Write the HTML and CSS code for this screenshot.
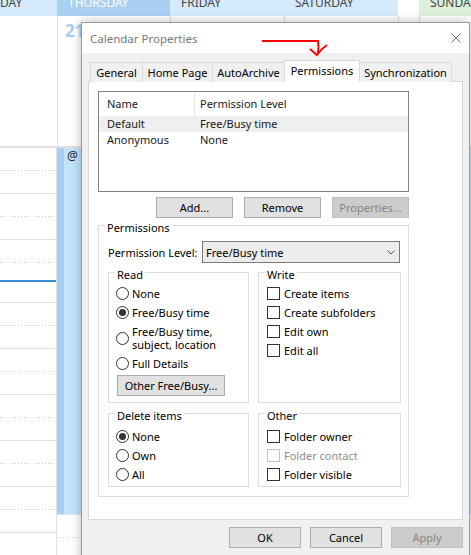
FILE: index.html
```html
<!DOCTYPE html>
<html>
<head>
<meta charset="utf-8">
<link rel="stylesheet" href="styles.css">
</head>
<body>
<div class="screen">
  <div class="calendar">
    <div class="cal-head">
      <div class="hcell first">DAY</div>
      <div class="hcell today">THURSDAY</div>
      <div class="hcell">FRIDAY</div>
      <div class="hcell">SATURDAY</div>
      <div class="hcell blank"></div>
      <div class="hcell sunday">SUNDAY</div>
    </div>
    <div class="cal-dates">
      <div class="dcell first"></div>
      <div class="dcell"><span class="daynum">21</span></div>
      <div class="dcell"></div>
      <div class="dcell"></div>
      <div class="dcell"></div>
      <div class="dcell"></div>
    </div>
    <div class="cal-times">
      <div class="tcol first">
        <div class="slot dot"></div>
        <div class="slot solid"></div>
        <div class="slot dot"></div>
        <div class="slot solid"></div>
        <div class="slot dot"></div>
        <div class="slot solid"><div class="nowline"></div></div>
        <div class="slot dot"></div>
        <div class="slot solid"></div>
        <div class="slot dot"></div>
        <div class="slot solid"></div>
        <div class="slot dot"></div>
        <div class="slot solid"></div>
        <div class="slot dot"></div>
        <div class="slot solid"></div>
        <div class="slot dot"></div>
        <div class="slot solid"></div>
        <div class="slot dot"></div>
        <div class="slot solid"></div>
      </div>
      <div class="tcol thu">
        <div class="appt"><div class="appt-strip"></div><div class="appt-body">@ i</div></div>
        <div class="slot dot"></div>
      </div>
    </div>
  </div>

  <div class="dialog">
    <div class="titlebar">
      <span class="title">Calendar Properties</span>
      <svg class="close" width="10" height="10" viewBox="0 0 10 10"><path d="M0.5 0.5 L9.5 9.5 M9.5 0.5 L0.5 9.5" stroke="#707070" stroke-width="1" fill="none"/></svg>
    </div>
    <div class="tabs">
      <div class="tab t-general">General</div>
      <div class="tab t-home">Home Page</div>
      <div class="tab t-archive">AutoArchive</div>
      <div class="tab t-perm active">Permissions</div>
      <div class="tab t-sync">Synchronization</div>
    </div>
    <div class="panel">
      <div class="listbox">
        <div class="lrow lhead"><span class="c1">Name</span><span class="c2">Permission Level</span></div>
        <div class="lrow sel"><span class="c1">Default</span><span class="c2">Free/Busy time</span></div>
        <div class="lrow"><span class="c1">Anonymous</span><span class="c2">None</span></div>
      </div>
      <div class="btnrow">
        <button class="btn">Add...</button>
        <button class="btn">Remove</button>
        <button class="btn disabled">Properties...</button>
      </div>
      <fieldset class="group outer">
        <legend>Permissions</legend>
        <div class="levelrow">
          <span class="lbl">Permission Level:</span>
          <div class="combo"><span>Free/Busy time</span><svg width="8" height="5" viewBox="0 0 8 5"><path d="M0.5 0.5 L4 4 L7.5 0.5" stroke="#555" fill="none"/></svg></div>
        </div>
        <div class="subgrid">
          <fieldset class="group read">
            <legend>Read</legend>
            <div class="opt"><span class="radio"></span><span>None</span></div>
            <div class="opt"><span class="radio on"></span><span>Free/Busy time</span></div>
            <div class="opt two"><span class="radio"></span><span>Free/Busy time,<br>subject, location</span></div>
            <div class="opt"><span class="radio"></span><span>Full Details</span></div>
            <button class="btn freebtn">Other Free/Busy...</button>
          </fieldset>
          <fieldset class="group write">
            <legend>Write</legend>
            <div class="opt chk"><span class="box"></span><span>Create items</span></div>
            <div class="opt chk"><span class="box"></span><span>Create subfolders</span></div>
            <div class="opt chk"><span class="box"></span><span>Edit own</span></div>
            <div class="opt chk"><span class="box"></span><span>Edit all</span></div>
          </fieldset>
          <fieldset class="group read del">
            <legend>Delete items</legend>
            <div class="opt"><span class="radio on"></span><span>None</span></div>
            <div class="opt"><span class="radio"></span><span>Own</span></div>
            <div class="opt"><span class="radio"></span><span>All</span></div>
          </fieldset>
          <fieldset class="group write other">
            <legend>Other</legend>
            <div class="opt chk"><span class="box"></span><span>Folder owner</span></div>
            <div class="opt chk off"><span class="box"></span><span>Folder contact</span></div>
            <div class="opt chk"><span class="box"></span><span>Folder visible</span></div>
          </fieldset>
        </div>
      </fieldset>
    </div>
    <div class="footer">
      <button class="btn fbtn">OK</button>
      <button class="btn fbtn">Cancel</button>
      <button class="btn fbtn disabled">Apply</button>
    </div>
  </div>

  <svg class="annot" width="471" height="555" viewBox="0 0 471 555">
    <path d="M262 41 H318 Q319 46 318 53" stroke="#ff0000" stroke-width="2" fill="none"/>
    <path d="M310 49 L317 55 Q321 49 327 45" stroke="#ff0000" stroke-width="2" fill="none"/>
  </svg>
</div>
</body>
</html>
```
FILE: styles.css
```css
* { box-sizing: border-box; }
body {
  margin: 0;
  width: 471px;
  height: 555px;
  overflow: hidden;
  background: #fff;
  font-family: "Noto Sans", sans-serif;
}
.screen {
  position: relative;
  width: 471px;
  height: 555px;
  overflow: hidden;
}

/* calendar background */
.cal-head {
  display: grid;
  grid-template-columns: 57px 113px 114px 114px 21px 52px;
  height: 16px;
  overflow: hidden;
}
.hcell {
  background: #d5eafa;
  color: #444;
  font-size: 12px;
  line-height: 5px;
  padding-left: 11px;
  white-space: nowrap;
  overflow: hidden;
}
.hcell.first { padding-left: 0; }
.hcell.today { background: #a8d0f3; color: #fff; }
.hcell.blank { background: #fff; }
.hcell.sunday { background: #dcefd9; }

.cal-dates {
  display: grid;
  grid-template-columns: 57px 113px 114px 114px 21px 52px;
  height: 132px;
  border-bottom: 2px solid #e1e1e1;
}
.dcell { border-left: 1px solid #e1e1e1; }
.dcell.first { border-left: 0; }
.daynum {
  display: block;
  font-weight: 700;
  font-size: 17px;
  line-height: 20px;
  color: #a8cdf0;
  padding: 5px 0 0 7px;
}

.cal-times {
  display: grid;
  grid-template-columns: 57px 1fr;
}
.tcol.first { border-right: 1px solid #e1e1e1; }
.slot { height: 23px; }
.slot.solid { border-bottom: 1px solid #e1e1e1; }
.slot.dot {
  background: linear-gradient(to right, #cccccc 1px, transparent 1px) left bottom / 3px 1px repeat-x;
}
.nowline {
  margin-top: 17px;
  height: 2px;
  background: #3b8ad8;
}
.appt {
  height: 367px;
  display: flex;
  border-bottom: 1px solid #e1e1e1;
}
.appt-strip { width: 7px; background: #a6cff3; }
.appt-body {
  flex: 1;
  background: #c1e4fb;
  font-size: 12px;
  line-height: 14px;
  padding: 1px 0 0 3px;
  color: #222;
}

/* dialog */
.dialog {
  position: absolute;
  left: 81px;
  top: 22px;
  width: 389px;
  height: 545px;
  border: 1px solid #9b9b9b;
  background: #f0f0f0;
  box-shadow: 0 0 10px rgba(0, 0, 0, 0.28);
  font-size: 11px;
  color: #000;
}
.titlebar {
  height: 30px;
  background: #fff;
  display: flex;
  align-items: center;
  justify-content: space-between;
  padding: 0 8px 0 8px;
}
.title { color: #777; font-size: 11.5px; }

.tabs {
  display: flex;
  align-items: flex-end;
  height: 29px;
  padding-left: 8px;
}
.tab {
  height: 20px;
  line-height: 19px;
  padding: 0;
  text-align: center;
  border: 1px solid #d9d9d9;
  border-bottom: 0;
  margin-left: -1px;
  background: #f0f0f0;
  white-space: nowrap;
  flex: none;
}
.tab:first-child { margin-left: 0; }
.t-general { width: 53px; }
.t-home { width: 71px; }
.t-archive { width: 73px; }
.t-perm { width: 76px; }
.t-sync { width: 93px; }
.tab.active {
  height: 22px;
  background: #fff;
  position: relative;
  z-index: 1;
}

.panel {
  margin: -1px 6px 0 6px;
  height: 439px;
  background: #fff;
  border: 1px solid #d9d9d9;
  padding: 9px 0 0 9px;
}
.listbox {
  width: 311px;
  height: 101px;
  border: 1px solid #828282;
  color: #1a1a1a;
}
.lrow { display: flex; height: 16px; line-height: 16px; }
.lhead { height: 24px; line-height: 23px; }
.c1 { width: 96px; padding-left: 8px; flex: none; }
.lhead .c1 { border-right: 1px solid #e5e5e5; }
.c2 { padding-left: 5px; }
.lrow.sel { background: #efefef; }

.btnrow {
  display: flex;
  justify-content: flex-end;
  gap: 11px;
  width: 311px;
  margin-top: 5px;
}
.btn {
  width: 77px;
  height: 21px;
  border: 1px solid #adadad;
  background: #e1e1e1;
  font-family: inherit;
  font-size: 11px;
  color: #000;
  padding: 0;
  margin: 0;
}
.btn.disabled {
  background: #cccccc;
  border-color: #bfbfbf;
  color: #838383;
}

fieldset.group {
  margin: 0;
  border: 1px solid #dcdcdc;
  min-width: 0;
}
legend {
  padding: 6px 2px 0;
  line-height: 14px;
  height: 20px;
}
fieldset.outer {
  width: 311px;
  margin-top: -3px;
  padding: 6px 7px 9px 9px;
}
.outer > legend { margin-left: -3px; }

.levelrow { display: flex; align-items: center; height: 22px; }
.lbl { width: 94px; flex: none; }
.combo {
  width: 198px;
  height: 22px;
  border: 1px solid #7a7a7a;
  background: #ececec;
  display: flex;
  align-items: center;
  justify-content: space-between;
  padding: 0 4px 0 3px;
}

.subgrid {
  display: grid;
  grid-template-columns: 141px 143px;
  column-gap: 9px;
  row-gap: 0;
  margin-top: -1px;
}
fieldset.read { padding: 2px 6px 6px 7px; }
.read > legend { margin-left: -1px; }
fieldset.write { padding: 2px 6px 6px 8px; }
.write > legend { margin-left: -2px; }
fieldset.del, fieldset.other { padding-top: 4px; padding-bottom: 2px; }

.opt {
  display: flex;
  align-items: center;
  height: 19px;
  gap: 3px;
  white-space: nowrap;
}
.opt.two { height: 32px; line-height: 13px; }
.opt.chk { gap: 4px; }
.radio {
  width: 13px;
  height: 13px;
  flex: none;
  border: 1px solid #333;
  border-radius: 50%;
  background: #fff;
  display: flex;
  align-items: center;
  justify-content: center;
}
.radio.on::after {
  content: "";
  width: 7px;
  height: 7px;
  border-radius: 50%;
  background: #333;
}
.box {
  width: 13px;
  height: 13px;
  flex: none;
  border: 1px solid #333;
  background: #fff;
}
.opt.off { color: #8d8d8d; }
.opt.off .box { border-color: #c4c4c4; }

.freebtn { width: 108px; margin: 2px 0 0 1px; }

.footer {
  display: flex;
  justify-content: flex-end;
  gap: 9px;
  padding: 7px 6px 0 0;
}
.fbtn { width: 72px; }

.annot {
  position: absolute;
  left: 0;
  top: 0;
  pointer-events: none;
}
```
